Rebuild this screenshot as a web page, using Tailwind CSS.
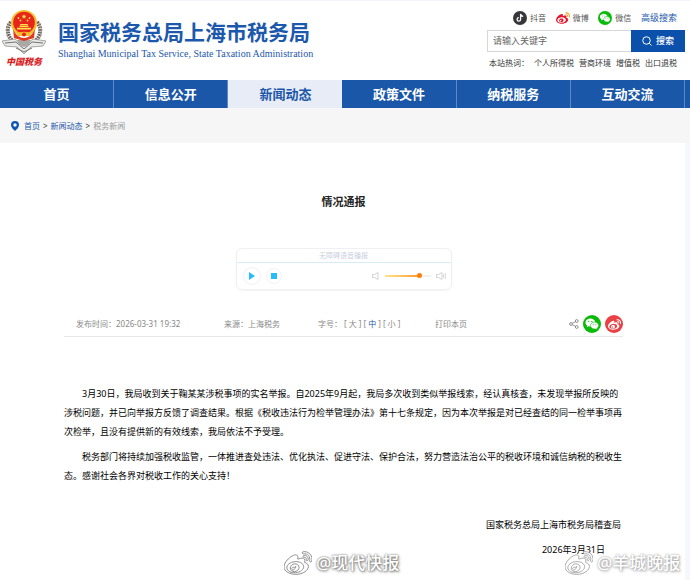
<!DOCTYPE html>
<html lang="zh-CN">

<head>
    <meta charset="utf-8" />
    <meta name="viewport" content="width=device-width, initial-scale=1" />
    <title>情况通报 - 国家税务总局上海市税务局</title>
    <script src="https://cdn.jsdelivr.net/npm/@tailwindcss/browser@4"></script>
</head>

<body class="relative min-h-screen overflow-x-hidden bg-[#f6f7fc] font-['Noto_Sans','Noto_Sans_CJK_SC',sans-serif] text-[#222]">
    <!-- shared icons -->
    <svg class="hidden">
        <symbol id="weibo" viewBox="0 0 24 24">
            <path d="M10.098 20.323c-3.977.391-7.414-1.406-7.672-4.02-.259-2.609 2.759-5.047 6.74-5.441 3.979-.394 7.413 1.404 7.671 4.018.259 2.6-2.759 5.049-6.737 5.439l-.002.004zM9.05 17.219c-.384.616-1.208.884-1.829.602-.612-.279-.793-.991-.406-1.593.379-.595 1.176-.861 1.793-.601.622.263.82.972.442 1.592zm1.27-1.627c-.141.237-.449.353-.689.253-.236-.09-.313-.361-.177-.586.138-.227.436-.346.672-.24.239.09.315.36.18.601l.014-.028zm.176-2.719c-1.893-.493-4.033.45-4.857 2.118-.836 1.704-.026 3.591 1.886 4.21 1.983.64 4.318-.341 5.132-2.179.8-1.793-.201-3.642-2.161-4.149zm7.563-1.224c-.346-.105-.57-.18-.405-.615.375-.977.42-1.804 0-2.404-.781-1.112-2.915-1.053-5.364-.03 0 0-.766.331-.571-.271.376-1.217.315-2.224-.27-2.809-1.338-1.337-4.869.045-7.888 3.08C1.309 10.87 0 13.273 0 15.348c0 3.981 5.099 6.395 10.086 6.395 6.536 0 10.888-3.801 10.888-6.82 0-1.822-1.547-2.854-2.915-3.284v.01z" />
            <path class="fill-[var(--wave,currentColor)]" d="M19.967 6.557c-.766-.856-1.908-1.187-2.96-.962-.436.09-.706.511-.616.932.09.42.511.691.932.602.511-.105 1.067.044 1.442.465.376.421.466.977.316 1.473-.136.406.089.856.51.992.405.119.857-.105.992-.512.33-1.021.12-2.178-.646-3.035l.03.045zm2.418-2.195c-1.576-1.757-3.905-2.419-6.054-1.968-.496.104-.812.587-.706 1.081.104.496.586.813 1.082.707 1.532-.331 3.185.15 4.296 1.383 1.112 1.246 1.429 2.943.947 4.416-.165.48.106 1.007.586 1.157.479.165.991-.104 1.157-.586.675-2.088.241-4.478-1.338-6.235l.03.045z" />
        </symbol>
        <symbol id="wechat" viewBox="0 0 24 24">
            <circle cx="12" cy="12" r="12" fill="#09bb07" />
            <path fill="#fff" d="M9.800 4.800c-3.600 0-6.500 2.300-6.500 5.200 0 1.700.9 3.100 2.400 4.100L5 16.200l2.300-1.200c.8.2 1.600.3 2.500.3 3.600 0 6.500-2.400 6.500-5.300s-2.900-5.200-6.500-5.200z" />
            <path fill="#fff" stroke="#09bb07" stroke-width=".8" d="M15.400 9.400c-3.100 0-5.600 2.100-5.600 4.700s2.500 4.700 5.600 4.700c.7 0 1.300-.1 1.900-.3l2 1-.6-1.700c1.400-.9 2.200-2.200 2.200-3.700 0-2.600-2.500-4.700-5.500-4.700z" />
            <g fill="#09bb07">
                <circle cx="7.700" cy="8.500" r=".8" />
                <circle cx="11.800" cy="8.500" r=".8" />
                <circle cx="13.600" cy="12.900" r=".7" />
                <circle cx="17.200" cy="12.900" r=".7" />
            </g>
        </symbol>
    </svg>

    <header class="flex justify-between border-t border-[#f3f4fb] bg-white h-20">
        <div class="flex gap-3 pl-0.5 pt-2">
            <div class="w-11 text-center">
                <svg class="block h-[46px] w-11" viewBox="0 0 44 46">
                    <!-- wheat ears -->
                    <g fill="none" stroke="#66625b" stroke-width="4" stroke-dasharray="1.800 .8">
                        <path d="M9 13C3 20 5 30 17 37" />
                        <path d="M35 13c6 7 4 17-8 24" />
                    </g>
                    <g fill="none" stroke="#a5a19a" stroke-width="1">
                        <path d="M8 14C2 21 4 30 14 36" />
                        <path d="M36 14c6 7 4 16-6 22" />
                    </g>
                    <!-- open book -->
                    <path d="M0 32l13-2 9 7 9-7 13 2-3 5-12 1-7 7-7-7-12-1z" fill="#e9e9e9" stroke="#96928e" stroke-width=".8" />
                    <path d="M3 34l11-1 8 7 8-7 11 1M14 39l8 4 8-4" fill="none" stroke="#77736f" stroke-width="1" />
                    <path d="M15 31h14l-2 5-5 2-5-2z" fill="#aaa8a4" />
                    <!-- national emblem -->
                    <circle cx="22" cy="14" r="13" fill="#f5bd2b" />
                    <path d="M11 20c2 5 6 9 11 9s9-4 11-9l-1 9-10 3-10-3z" fill="#e23a20" />
                    <circle cx="22" cy="13.500" r="10.800" fill="#e6251d" />
                    <path d="M22 5l.7 1.700 1.900.1-1.500 1.200.5 1.800-1.600-1-1.600 1 .5-1.800-1.500-1.200 1.900-.1z" fill="#ffe04a" />
                    <g fill="#ffe04a">
                        <circle cx="16.500" cy="9" r=".9" />
                        <circle cx="27.500" cy="9" r=".9" />
                        <circle cx="18.500" cy="11.500" r=".9" />
                        <circle cx="25.500" cy="11.500" r=".9" />
                        <path d="M18.500 15h7l1 1.500h-9zM17.500 17h9v1h-9zM15 18.800h14V20.500H15z" />
                    </g>
                    <path d="M15 25c3-3 11-3 14 0l-1 2H16z" fill="#f5bd2b" />
                    <circle cx="22" cy="25.500" r="2" fill="#e6251d" />
                </svg>
                <div class="text-[9px] leading-[14px] font-black italic text-[#d81e1e]">中国税务</div>
            </div>
            <div class="pt-2 text-[#1c58ab]">
                <h1 class="text-[21px] leading-[30px] font-bold">国家税务总局上海市税务局</h1>
                <p class="font-['Liberation_Serif',serif] text-[10px] leading-[14px]">Shanghai Municipal Tax Service, State Taxation Administration</p>
            </div>
        </div>

        <div class="w-[203px] pr-[5px] pt-[9px] text-[8px] text-[#555]">
            <div class="flex h-4 items-center justify-between pl-[26px] pr-2">
                <a href="#" class="flex items-center gap-[3px]">
                    <svg class="size-[14px]" viewBox="0 0 24 24">
                        <circle cx="12" cy="12" r="12" fill="#36363b" />
                        <path d="M13 5v9.500a3 3 0 1 1-3-3M13 5c.3 2.500 2 4 4.500 4.200" fill="none" stroke="#fff" stroke-width="2.200" />
                    </svg>抖音
                </a>
                <a href="#" class="flex items-center gap-[3px]">
                    <svg class="size-[14px] fill-[#e6162d] [--wave:#f7a034]"><use href="#weibo" /></svg>微博
                </a>
                <a href="#" class="flex items-center gap-[3px]">
                    <svg class="size-[14px]"><use href="#wechat" /></svg>微信
                </a>
                <a href="#" class="text-[9px] text-[#1c58ab]">高级搜索</a>
            </div>
            <form class="mt-1 flex h-[22px]">
                <input type="text" aria-label="搜索关键字" placeholder="请输入关键字" class="w-0 flex-1 border border-r-0 border-[#d5d7da] px-[5px] text-[9px] placeholder:text-[#666]" />
                <button type="button" class="flex w-[54px] items-center justify-center gap-1 bg-[#0b50ab] text-[9px] font-medium text-white">
                    <svg class="size-[10px]" viewBox="0 0 20 20" fill="none" stroke="#fff" stroke-width="2">
                        <circle cx="9" cy="9" r="7.500" />
                        <path d="M14.500 14.500L19 19" />
                    </svg>搜索
                </button>
            </form>
            <div class="mt-1 flex h-[14px] items-center justify-between pl-0.5 pr-2 text-[#333]">
                <span>本站热词：</span>
                <a href="#">个人所得税</a>
                <a href="#">营商环境</a>
                <a href="#">增值税</a>
                <a href="#">出口退税</a>
            </div>
        </div>
    </header>

    <nav class="bg-[#1b57a9] pr-[5px]">
        <div class="grid h-7 grid-cols-6 text-center text-[13px] leading-7 font-bold text-white">
            <a href="#" class="border-r border-[#5f89c3]">首页</a>
            <a href="#" class="border-r border-[#5f89c3]">信息公开</a>
            <a href="#" class="bg-[#e7ecf7] text-[#1b57a9]">新闻动态</a>
            <a href="#" class="border-r border-[#5f89c3]">政策文件</a>
            <a href="#" class="border-r border-[#5f89c3]">纳税服务</a>
            <a href="#" class="border-r border-[#5f89c3]">互动交流</a>
        </div>
    </nav>

    <div class="flex h-[35px] items-center gap-[3px] bg-[#f6f6f7] pl-[11px] text-[8px] text-[#1c58ab]">
        <svg class="mr-[2px] h-[10px] w-2" viewBox="0 0 16 20">
            <path fill="#0d55b0" fill-rule="evenodd" d="M8 0a8 8 0 0 0-8 8c0 5 5 9 8 12 3-3 8-7 8-12a8 8 0 0 0-8-8zm0 4.500a3.500 3.500 0 1 1 0 7 3.500 3.500 0 0 1 0-7z" />
        </svg>
        <a href="#">首页</a>
        <span class="text-[#333]">&gt;</span>
        <a href="#">新闻动态</a>
        <span class="text-[#333]">&gt;</span>
        <span class="text-[#999]">税务新闻</span>
    </div>

    <main class="mr-[5px] min-h-[437px] bg-white pl-16 pr-[62px] pt-[50px]">
        <h2 class="text-center text-[11px] leading-[18px] font-bold">情况通报</h2>

        <!-- audio player -->
        <section class="mx-auto mt-[37px] h-[42px] w-[216px] rounded-md border border-[#eef0f3] shadow-xs">
            <p class="h-[14px] border-b border-[#d9ebf4] text-center text-[7px] leading-[13px] text-[#cdd0df]">无障碍语音播报</p>
            <div class="flex h-[26px] items-center pl-[6px] pr-[5px]">
                <button type="button" aria-label="播放" class="flex size-[18px] items-center justify-center rounded-full border border-[#f0f2f6]">
                    <svg class="h-2 w-[7px]" viewBox="0 0 7 8"><path d="M1 0l6 4-6 4z" fill="#27bdf8" /></svg>
                </button>
                <button type="button" aria-label="停止" class="ml-[5px] flex size-4 items-center justify-center rounded-full border border-[#f0f2f6]">
                    <span class="size-[6px] bg-[#27bdf8]"></span>
                </button>
                <svg class="ml-auto h-2 w-[7px]" viewBox="0 0 7 8" fill="none" stroke="#c9c9c9" stroke-width=".8"><path d="M.5 2.500h2L6 .5v7l-3.500-2h-2z" /></svg>
                <label class="relative ml-[6px] mr-[5px] h-[6px] w-[46px]">
                    <span class="absolute inset-x-0 top-[2px] h-0.5 bg-[#f1f1f4]"></span>
                    <span class="absolute left-0 top-[2px] h-0.5 w-[35px] bg-linear-to-r from-[#ffe28a] to-[#ff9a2e]"></span>
                    <span class="absolute left-[32px] top-0 size-[5px] rounded-full bg-[#ff7e0a]"></span>
                    <input type="range" aria-label="音量" min="0" max="100" value="75" class="absolute inset-0 h-full w-full opacity-0" />
                </label>
                <svg class="h-2 w-[10px]" viewBox="0 0 10 8" fill="none" stroke="#c9c9c9" stroke-width=".8"><path d="M.5 2.500h2L6 .5v7l-3.500-2h-2zM7.500 2.500v3M9.300 1v6" /></svg>
            </div>
        </section>

        <div class="mt-[22px] flex h-[25px] items-center border-b border-[#e8e8e8] pl-3 text-[8px] text-[#888]">
            <span class="w-[148px]">发布时间：2026-03-31 19:32</span>
            <span class="w-[94px]">来源：上海税务</span>
            <span class="flex w-[117px] items-center gap-0.5">
                字号：
                <button type="button">[ 大 ]</button>
                <button type="button">[ <b class="font-normal text-[#1c58ab]">中</b> ]</button>
                <button type="button">[ 小 ]</button>
            </span>
            <button type="button">打印本页</button>
            <div class="ml-auto flex items-center gap-1">
                <svg class="size-[10px]" viewBox="0 0 20 20" fill="none" stroke="#777" stroke-width="1.600">
                    <circle cx="4" cy="10" r="2.800" />
                    <circle cx="15.500" cy="4" r="2.800" />
                    <circle cx="15.500" cy="16" r="2.800" />
                    <path d="M6.500 8.700L13 5.300M6.500 11.300l6.500 3.400" />
                </svg>
                <a href="#" aria-label="微信"><svg class="size-[18px]"><use href="#wechat" /></svg></a>
                <a href="#" aria-label="微博" class="flex size-[18px] items-center justify-center rounded-full bg-[#ea4145]">
                    <svg class="size-[13px] fill-white [--wave:#fff]"><use href="#weibo" /></svg>
                </a>
            </div>
        </div>

        <article class="pt-[47px] text-[9px] leading-[19px] text-black">
            <p class="indent-[2em]">3月30日，我局收到关于鞠某某涉税事项的实名举报。自2025年9月起，我局多次收到类似举报线索，经认真核查，未发现举报所反映的涉税问题，并已向举报方反馈了调查结果。根据《税收违法行为检举管理办法》第十七条规定，因为本次举报是对已经查结的同一检举事项再次检举，且没有提供新的有效线索，我局依法不予受理。</p>
            <p class="mt-[6px] indent-[2em]">税务部门将持续加强税收监管，一体推进查处违法、优化执法、促进守法、保护合法，努力营造法治公平的税收环境和诚信纳税的税收生态。感谢社会各界对税收工作的关心支持！</p>
            <p class="mt-[30px] pr-0.5 text-right">国家税务总局上海市税务局稽查局</p>
            <p class="mt-[6px] pr-[18px] text-right">2026年3月31日</p>
        </article>
    </main>

    <!-- watermarks -->
    <div class="absolute left-[284px] top-[549px] flex items-center gap-1 text-[17px] leading-[26px] font-medium text-white [text-shadow:0_0_2px_#666,1px_1px_3px_#777]">
        <svg class="size-7 overflow-visible fill-white stroke-[#777] stroke-[0.7px] [--wave:#fff]"><use href="#weibo" /></svg>
        <span>@现代快报</span>
    </div>
    <div class="absolute left-[565px] top-[549px] flex items-center gap-1 whitespace-nowrap text-[17px] leading-[26px] font-medium text-white [text-shadow:0_0_2px_#999,1px_1px_3px_#aaa]">
        <svg class="size-7 overflow-visible fill-white stroke-[#999] stroke-[0.7px] [--wave:#fff]"><use href="#weibo" /></svg>
        <span>@羊城晚报</span>
    </div>
</body>

</html>
